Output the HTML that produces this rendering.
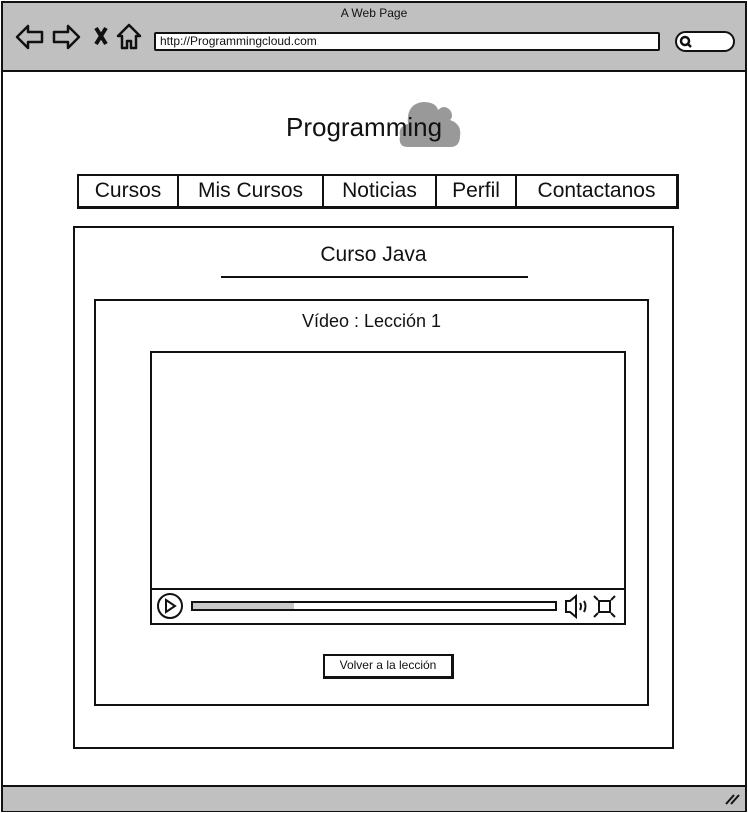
<!DOCTYPE html>
<html><head><style>
*{margin:0;padding:0;box-sizing:border-box}
body{width:748px;height:813px;background:#fff;position:relative;overflow:hidden;font-family:"Liberation Sans",sans-serif;color:#111}
.a{position:absolute}
.b{border:2px solid #111}
</style></head><body>
<div class="a b" style="left:1px;top:1px;width:746px;height:811px;"></div>
<div class="a" style="left:3px;top:3px;width:742px;height:69px;background:#c0c0c0;border-bottom:2px solid #111"></div>
<div class="a" style="left:0;top:6px;width:748px;text-align:center;font-size:12px">A Web Page</div>
<svg class="a" style="left:14px;top:22px" width="130" height="30" viewBox="0 0 130 30" fill="none" stroke="#111" stroke-width="2.5" stroke-linejoin="round">
<path d="M3 15 L14 4 L14 10 L28 10 L28 20 L14 20 L14 26 Z"/>
<path d="M65 15 L54 4 L54 10 L40 10 L40 20 L54 20 L54 26 Z"/>
<path d="M82 6 L92 22 M92 6 L82 22" stroke-width="4"/>
<path d="M115 3 L104 14 L108 14 L108 26 L113 26 L113 19 L117 19 L117 26 L122 26 L122 14 L126 14 Z"/>
</svg>
<div class="a b" style="left:154px;top:32px;width:506px;height:19px;background:#fff;font-size:12px;padding-left:4px;line-height:15px;border-radius:2px">http://Programmingcloud.com</div>
<div class="a b" style="left:675px;top:31px;width:60px;height:21px;background:#fff;border-radius:11px"></div>
<svg class="a" style="left:679px;top:35px" width="14" height="14"><circle cx="6" cy="6" r="4" fill="none" stroke="#111" stroke-width="2.5"/><path d="M9 9 L12 12" stroke="#111" stroke-width="2.5"/></svg>
<div class="a" style="left:3px;top:785px;width:742px;height:26px;background:#c0c0c0;border-top:2px solid #111"></div>
<svg class="a" style="left:724px;top:792px" width="16" height="14"><path d="M2 12 L10 3 M7 12 L15 3" stroke="#111" stroke-width="2"/></svg>

<svg class="a" style="left:398px;top:100px" width="66" height="50"><path d="M10 47 Q0 47 2 36 Q0 26 10 24 Q8 4 25 2 Q38 2 40 10 Q46 4 52 10 Q56 16 52 20 Q64 24 62 36 Q62 47 52 47 Z" fill="#999"/></svg>
<div class="a" style="left:286px;top:112px;font-size:26px">Programming</div>

<div class="a" style="left:77px;top:174px;width:602px;height:35px;border:2px solid #111;border-bottom-width:3px;border-right-width:3px;display:flex;font-size:21px;line-height:30px">
<div style="width:100px;text-align:center;border-right:2px solid #111">Cursos</div>
<div style="width:145px;text-align:center;border-right:2px solid #111">Mis Cursos</div>
<div style="width:113px;text-align:center;border-right:2px solid #111">Noticias</div>
<div style="width:80px;text-align:center;border-right:2px solid #111">Perfil</div>
<div style="flex:1;text-align:center">Contactanos</div>
</div>

<div class="a b" style="left:73px;top:226px;width:601px;height:523px"></div>
<div class="a" style="left:73px;top:243px;width:601px;text-align:center;font-size:21px">Curso Java</div>
<div class="a" style="left:221px;top:276px;width:307px;height:2px;background:#111"></div>
<div class="a b" style="left:94px;top:299px;width:555px;height:407px"></div>
<div class="a" style="left:94px;top:311px;width:555px;text-align:center;font-size:18px">Vídeo : Lección 1</div>
<div class="a b" style="left:150px;top:351px;width:476px;height:274px"></div>
<div class="a" style="left:152px;top:588px;width:472px;height:2px;background:#111"></div>
<svg class="a" style="left:155px;top:592px" width="470" height="30" fill="none" stroke="#111" stroke-width="2">
<circle cx="15" cy="14" r="12"/><path d="M11 8 L20 14 L11 20 Z"/>
<rect x="37" y="10" width="364" height="8" fill="#fff"/><rect x="38" y="11" width="101" height="6" fill="#c8c8c8" stroke="none"/>
<path d="M411 9 L415 9 L421 4 L421 25 L415 20 L411 20 Z"/><path d="M425 11 Q427 14 425 18 M429 9 Q432 14 429 20"/>
<rect x="444" y="9" width="11" height="11"/><path d="M439 4 L443 8 M460 4 L456 8 M439 25 L443 21 M460 25 L456 21"/>
</svg>
<div class="a" style="left:323px;top:654px;width:131px;height:25px;border:2px solid #111;border-right-width:3px;border-bottom-width:3px;font-size:12px;text-align:center;line-height:19px">Volver a la lección</div>
</body></html>
